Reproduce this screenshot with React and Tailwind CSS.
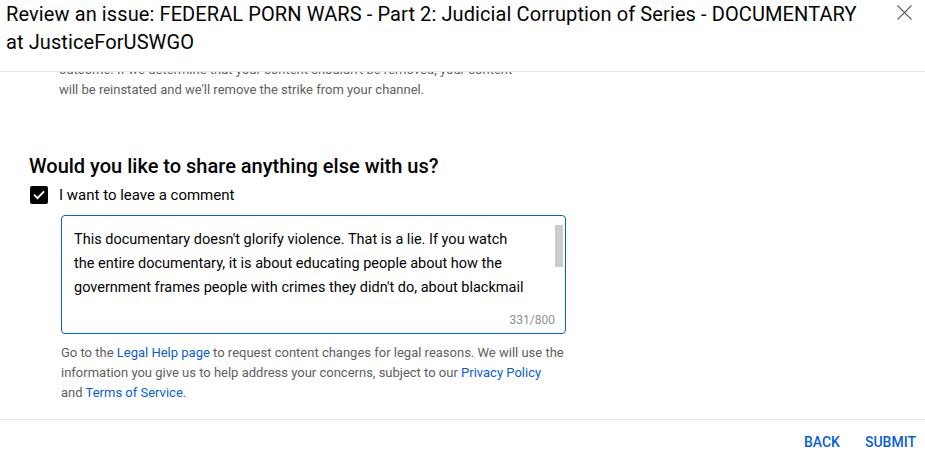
import React from "react";

const font = { fontFamily: "Roboto, 'Noto Sans', Arial, sans-serif" };

export default function App() {
  return (
    <div className="w-[925px] h-[464px] bg-white flex flex-col overflow-hidden text-[#030303]" style={font}>
      {/* Header */}
      <div className="relative z-10 flex h-[72px] shrink-0 border-b border-[#e5e5e5] bg-white">
        <h1 className="pl-[6px] w-[868px] text-[20px] leading-[28px] tracking-[0.1px] font-normal text-[#030303]">
          Review an issue: FEDERAL PORN WARS - Part 2: Judicial Corruption of Series - DOCUMENTARY at JusticeForUSWGO
        </h1>
        <button className="absolute right-[12px] top-[4px] w-[17px] h-[17px] flex items-center justify-center">
          <svg width="17" height="17" viewBox="0 0 17 17" fill="none" stroke="#606060" strokeWidth="1.1">
            <path d="M1.5 1.5 L15.5 15.5 M15.5 1.5 L1.5 15.5" />
          </svg>
        </button>
      </div>

      {/* Scroll area */}
      <div className="flex-1 overflow-hidden">
        <div className="-mt-[12px]">
          <p className="pl-[59px] w-[520px] text-[13px] leading-[20px] text-[#606060]">
            outcome. If we determine that your content shouldn't be removed, your content will be reinstated and we'll remove the strike from your channel.
          </p>

          <h2 className="mt-[54px] pl-[29px] text-[20px] leading-[24px] font-medium text-[#030303]">
            Would you like to share anything else with us?
          </h2>

          <div className="mt-[5px] flex items-center h-[24px] pl-[30px]">
            <div className="w-[18px] h-[18px] rounded-[2px] bg-[#030303] flex items-center justify-center">
              <svg width="14" height="14" viewBox="0 0 24 24" fill="none" stroke="white" strokeWidth="3.2" strokeLinecap="square">
                <path d="M4.5 12.5 L9.5 17.5 L19.5 7" />
              </svg>
            </div>
            <span className="ml-[11px] text-[15px] leading-[20px] text-[#030303]">I want to leave a comment</span>
          </div>

          <div className="ml-[61px] mt-[8px] w-[505px] h-[119px] relative rounded-[4px] border border-[#065fd4]">
            <div className="absolute right-[2px] top-[9px] w-[8px] h-[42px] bg-[#cccccc]" />
            <div className="pl-[12px] pr-[36px] pt-[12px] h-[84px] overflow-hidden text-[14.5px] leading-[24px] text-[#030303]">
              This documentary doesn't glorify violence. That is a lie. If you watch the entire documentary, it is about educating people about how the government frames people with crimes they didn't do, about blackmail and corruption in the courts. It shows real evidence and real documents so people can understand what is happening and protect themselves from it.
            </div>
            <div className="absolute right-[10px] bottom-[5px] text-[12px] leading-[16px] text-[#909090]">331/800</div>
          </div>

          <p className="ml-[61px] mt-[9px] w-[503px] text-[13px] leading-[20px] text-[#606060]">
            Go to the <span className="text-[#065fd4]">Legal Help page</span> to request content changes for legal reasons. We will use the information you give us to help address your concerns, subject to our <span className="text-[#065fd4]">Privacy Policy</span> and <span className="text-[#065fd4]">Terms of Service</span>.
          </p>
        </div>
      </div>

      {/* Footer */}
      <div className="h-[45px] shrink-0 border-t border-[#e5e5e5] flex items-center justify-end pr-[9px] gap-[25px]">
        <button className="text-[14px] font-medium leading-[20px] text-[#065fd4]">BACK</button>
        <button className="text-[14px] font-medium leading-[20px] text-[#065fd4]">SUBMIT</button>
      </div>
    </div>
  );
}
